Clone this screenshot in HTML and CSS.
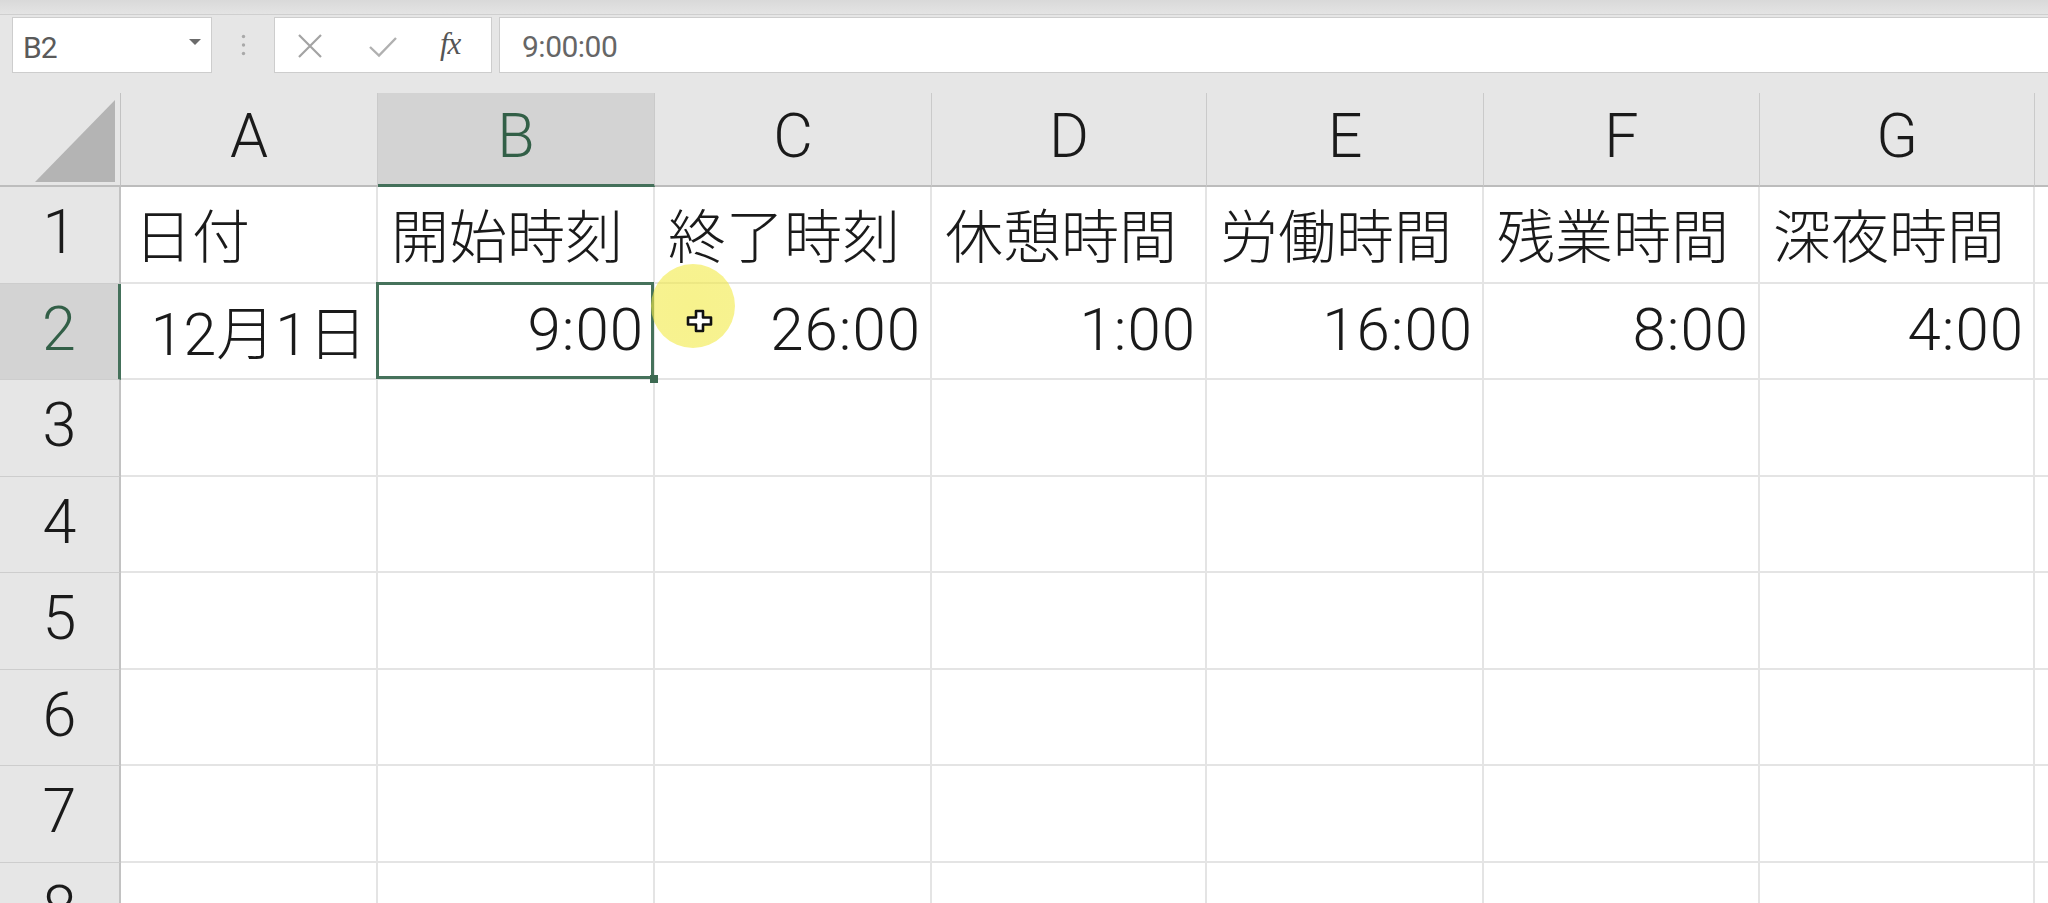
FILE: index.html
```html
<!DOCTYPE html>
<html lang="ja">
<head>
<meta charset="utf-8">
<title>Excel</title>
<link rel="stylesheet" href="styles.css">
</head>
<body>
<div class="app">
  <div class="topstrip"></div>
  <div class="formula-bar">
    <div class="namebox">
      <span class="nb-text">B2</span>
      <svg class="nb-arrow" width="12" height="6" viewBox="0 0 12 6"><path d="M0 0 H12 L6 6 Z" fill="#6b6b6b"/></svg>
    </div>
    <div class="grip">
      <svg width="5" height="22" viewBox="0 0 5 22"><circle cx="2.5" cy="2.5" r="1.7" fill="#a9a9a9"/><circle cx="2.5" cy="11" r="1.7" fill="#a9a9a9"/><circle cx="2.5" cy="19.5" r="1.7" fill="#a9a9a9"/></svg>
    </div>
    <div class="fbtns">
      <svg class="fb-x" width="26" height="26" viewBox="0 0 26 26"><path d="M2 2 L24 24 M24 2 L2 24" stroke="#a3a3a3" stroke-width="2.2" fill="none"/></svg>
      <svg class="fb-check" width="30" height="22" viewBox="0 0 30 22"><path d="M2 11 L11 19.5 L28 2" stroke="#b0b0b0" stroke-width="2.4" fill="none"/></svg>
      <span class="fb-fx">fx</span>
    </div>
    <div class="finput">9:00:00</div>
  </div>

  <div class="sheet">
    <div class="corner"><svg width="80" height="82" viewBox="0 0 80 82"><path d="M80 0 V82 H0 Z" fill="#b4b4b4"/></svg></div>
    <div class="colhead">A</div>
    <div class="colhead sel">B</div>
    <div class="colhead">C</div>
    <div class="colhead">D</div>
    <div class="colhead">E</div>
    <div class="colhead">F</div>
    <div class="colhead">G</div>
    <div class="colhead"></div>

    <div class="rowhead">1</div>
    <div class="cell">日付</div>
    <div class="cell">開始時刻</div>
    <div class="cell">終了時刻</div>
    <div class="cell">休憩時間</div>
    <div class="cell">労働時間</div>
    <div class="cell">残業時間</div>
    <div class="cell">深夜時間</div>
    <div class="cell"></div>

    <div class="rowhead sel">2</div>
    <div class="cell num date">12月1日</div>
    <div class="cell num active">9:00</div>
    <div class="cell num">26:00</div>
    <div class="cell num">1:00</div>
    <div class="cell num">16:00</div>
    <div class="cell num">8:00</div>
    <div class="cell num">4:00</div>
    <div class="cell"></div>

    <div class="rowhead">3</div>
    <div class="cell"></div><div class="cell"></div><div class="cell"></div><div class="cell"></div><div class="cell"></div><div class="cell"></div><div class="cell"></div><div class="cell"></div>
    <div class="rowhead">4</div>
    <div class="cell"></div><div class="cell"></div><div class="cell"></div><div class="cell"></div><div class="cell"></div><div class="cell"></div><div class="cell"></div><div class="cell"></div>
    <div class="rowhead">5</div>
    <div class="cell"></div><div class="cell"></div><div class="cell"></div><div class="cell"></div><div class="cell"></div><div class="cell"></div><div class="cell"></div><div class="cell"></div>
    <div class="rowhead">6</div>
    <div class="cell"></div><div class="cell"></div><div class="cell"></div><div class="cell"></div><div class="cell"></div><div class="cell"></div><div class="cell"></div><div class="cell"></div>
    <div class="rowhead">7</div>
    <div class="cell"></div><div class="cell"></div><div class="cell"></div><div class="cell"></div><div class="cell"></div><div class="cell"></div><div class="cell"></div><div class="cell"></div>
    <div class="rowhead">8</div>
    <div class="cell"></div><div class="cell"></div><div class="cell"></div><div class="cell"></div><div class="cell"></div><div class="cell"></div><div class="cell"></div><div class="cell"></div>
  </div>
</div>

<div class="pointer-glow"></div>
<svg class="pointer" width="28" height="24" viewBox="0 0 28 24"><path d="M10 2 H17 V8.5 H25 V15.5 H17 V22 H10 V15.5 H2 V8.5 H10 Z" fill="#ffffff" stroke="#111111" stroke-width="2.6" stroke-linejoin="round"/></svg>
</body>
</html>
```

FILE: styles.css
```css
html, body {
  margin: 0;
  padding: 0;
}

body {
  width: 2048px;
  height: 903px;
  overflow: hidden;
  background: #e6e6e6;
  font-family: "Roboto", "Liberation Sans", "Noto Sans CJK JP", sans-serif;
  font-weight: 300;
  color: #1e1e1e;
  position: relative;
}

.app {
  display: flex;
  flex-direction: column;
  width: 2048px;
}

.topstrip {
  height: 15px;
  background: linear-gradient(#d9d9d9, #e4e4e4);
  border-bottom: 1px solid #cfcfcf;
  box-sizing: border-box;
}

.formula-bar {
  display: flex;
  align-items: stretch;
  height: 56px;
  margin-top: 2px;
  margin-bottom: 20px;
}

.namebox {
  margin-left: 12px;
  width: 200px;
  box-sizing: border-box;
  background: #ffffff;
  border: 1px solid #cdcdcd;
  display: flex;
  align-items: center;
  justify-content: space-between;
  padding: 0 10px 0 10px;
}

.nb-text {
  font-family: "Roboto", "Liberation Sans", sans-serif;
  font-weight: 400;
  font-size: 30px;
  letter-spacing: -1px;
  color: #5a5a5a;
  padding-top: 4px;
}

.nb-arrow {
  margin-top: -6px;
}

.grip {
  width: 62px;
  display: flex;
  align-items: center;
  justify-content: center;
}

.fbtns {
  width: 218px;
  box-sizing: border-box;
  background: #ffffff;
  border: 1px solid #cdcdcd;
  display: flex;
  align-items: center;
  padding-left: 22px;
}

.fb-x {
  margin-top: 2px;
}

.fb-check {
  margin-left: 45px;
  margin-top: 4px;
}

.fb-fx {
  margin-left: 42px;
  font-family: "Liberation Serif", serif;
  font-weight: 400;
  font-style: italic;
  font-size: 31px;
  letter-spacing: -1px;
  color: #555555;
  margin-top: -2px;
}

.finput {
  flex: 1;
  margin-left: 7px;
  box-sizing: border-box;
  background: #ffffff;
  border-top: 1px solid #cdcdcd;
  border-bottom: 1px solid #cdcdcd;
  border-left: 1px solid #cdcdcd;
  display: flex;
  align-items: center;
  padding-left: 22px;
  padding-top: 2px;
  font-family: "Roboto", "Liberation Sans", sans-serif;
  font-weight: 400;
  font-size: 30px;
  letter-spacing: -0.5px;
  color: #666666;
}

.sheet {
  display: grid;
  grid-template-columns: 121px 257px 277px 277px 275px 277px 276px 275px 1fr;
  grid-template-rows: 94px repeat(8, 96.5px);
}

.corner {
  box-sizing: border-box;
  border-right: 1px solid #c2c2c2;
  border-bottom: 2px solid #bdbdbd;
  display: flex;
  align-items: flex-end;
  justify-content: flex-end;
  padding: 0 5px 3px 0;
}

.colhead {
  box-sizing: border-box;
  border-right: 1px solid #cacaca;
  border-bottom: 2px solid #bcbcbc;
  display: flex;
  align-items: center;
  justify-content: center;
  font-size: 61px;
  color: #1a1a1a;
  padding-bottom: 6px;
}

.colhead.sel {
  background: #d3d3d3;
  color: #325f47;
  border-bottom: 3px solid #44705a;
}

.rowhead {
  box-sizing: border-box;
  border-right: 2px solid #c2c2c2;
  border-bottom: 1px solid #cdcdcd;
  display: flex;
  align-items: center;
  justify-content: center;
  font-size: 61px;
  color: #1a1a1a;
  padding-bottom: 5px;
}

.rowhead.sel {
  background: #d3d3d3;
  color: #325f47;
  border-right: 3px solid #44705a;
}

.cell {
  box-sizing: border-box;
  background: #ffffff;
  border-right: 2px solid #e4e4e4;
  border-bottom: 2px solid #e4e4e4;
  display: flex;
  align-items: center;
  padding: 0 10px 2px 13px;
  font-size: 58px;
  white-space: nowrap;
  overflow: visible;
  color: #1a1a1a;
}

.cell.num {
  justify-content: flex-end;
  font-size: 60px;
  letter-spacing: 1px;
  padding-right: 9px;
}

.cell.date {
  font-size: 59px;
  letter-spacing: 0;
}

.cell.active {
  position: relative;
}

.cell.active::after {
  content: "";
  position: absolute;
  left: -2px;
  top: -2px;
  right: -1px;
  bottom: -1px;
  border: 3px solid #46725b;
}

.cell.active::before {
  content: "";
  position: absolute;
  right: -5px;
  bottom: -5px;
  width: 8px;
  height: 8px;
  background: #3d6a52;
  z-index: 2;
}

.pointer-glow {
  position: absolute;
  left: 651px;
  top: 264px;
  width: 84px;
  height: 84px;
  border-radius: 50%;
  background: radial-gradient(circle, rgba(242, 234, 70, 0.62) 0%, rgba(242, 234, 70, 0.6) 80%, rgba(242, 234, 70, 0) 100%);
  z-index: 5;
}

.pointer {
  position: absolute;
  left: 686px;
  top: 309px;
  z-index: 6;
}
```
